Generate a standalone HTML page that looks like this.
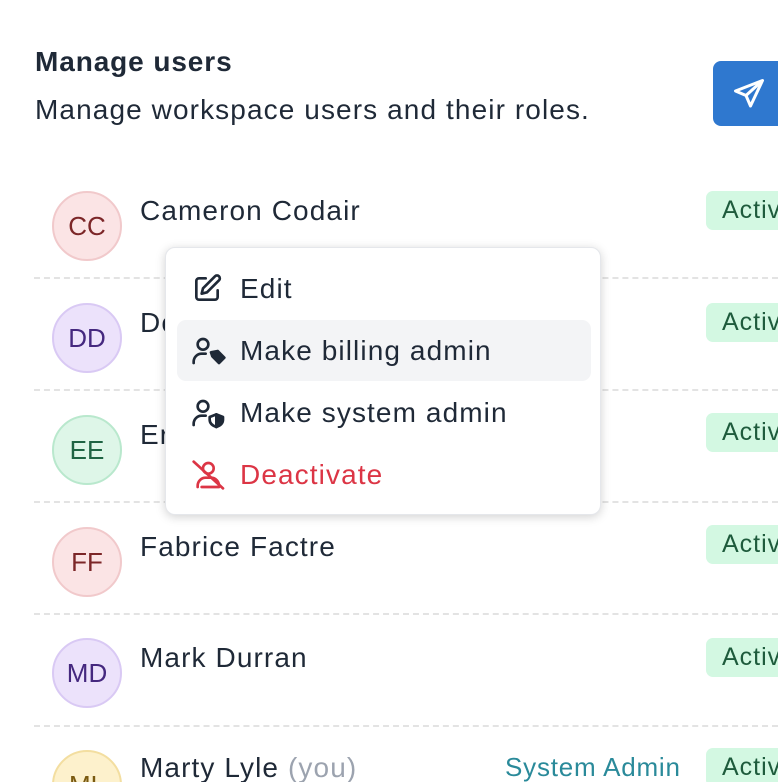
<!DOCTYPE html>
<html><head><style>
html,body{margin:0;width:778px;height:782px;overflow:hidden}
body{background:#fff;font-family:"Liberation Sans",sans-serif;color:#1f2937;position:relative;letter-spacing:1.1px}
.a{position:absolute}
h1{position:absolute;left:35px;top:46px;margin:0;font-size:28px;font-weight:bold;color:#1f2937;letter-spacing:0.9px}
.sub{left:35px;top:94px;font-size:28px;color:#1f2937}
.btn{left:713px;top:61px;width:90px;height:65px;background:#2f78cf;border-radius:8px}
.row{position:absolute;left:0;width:778px;height:100px;overflow:hidden}
.av{position:absolute;left:52px;top:13px;width:66px;height:66px;border-radius:50%;border:2px solid;display:flex;align-items:center;justify-content:center;font-size:26px;letter-spacing:0}
.nm{position:absolute;left:140px;top:2px;font-size:28px;color:#1f2937}
.bd{position:absolute;left:706px;top:3px;width:100px;height:39px;background:#d3f8e2;border-radius:7px;font-size:25px;color:#1e5b3c;padding-left:16px;box-sizing:border-box;line-height:39px;letter-spacing:1px}
.ln{position:absolute;left:34px;width:744px;border-top:2px dashed #e3e3e3}
.menu{left:165px;top:247px;width:436px;height:268px;background:#fff;border-radius:10px;box-shadow:0 2px 10px rgba(0,0,0,.18);border:1px solid #e5e7eb;box-sizing:border-box}
.it{position:absolute;left:11px;width:414px;height:61px;border-radius:9px;font-size:28px;line-height:61px;padding-left:63px;box-sizing:border-box}
.it svg{position:absolute;left:14px;top:15px}
</style></head><body>
<h1>Manage users</h1>
<div class="a sub">Manage workspace users and their roles.</div>
<div class="a btn"><svg width="36" height="36" viewBox="0 0 24 24" style="position:absolute;left:18px;top:15px" fill="none" stroke="#fff" stroke-width="2" stroke-linejoin="round"><path d="M21 3L3 10l7 3 3 7z"/><path d="M21 3L10 13"/></svg></div>

<div class="row" style="top:178px"><div class="av" style="background:#fbe4e5;border-color:#f1c9cb;color:#7c2628">CC</div><div class="nm" style="top:17px">Cameron Codair</div><div class="bd" style="top:13px">Active</div></div>
<div class="ln" style="top:277px"></div>
<div class="row" style="top:290px"><div class="av" style="background:#ece2fb;border-color:#d9c9f4;color:#45287f">DD</div><div class="nm" style="top:17px">Do</div><div class="bd" style="top:13px">Active</div></div>
<div class="ln" style="top:389px"></div>
<div class="row" style="top:402px"><div class="av" style="background:#def6e8;border-color:#b9e8cd;color:#1f6443">EE</div><div class="nm" style="top:17px">Er</div><div class="bd" style="top:11px">Active</div></div>
<div class="ln" style="top:501px"></div>
<div class="row" style="top:514px"><div class="av" style="background:#fbe4e5;border-color:#f1c9cb;color:#7c2628">FF</div><div class="nm" style="top:17px">Fabrice Factre</div><div class="bd" style="top:11px">Active</div></div>
<div class="ln" style="top:613px"></div>
<div class="row" style="top:625px"><div class="av" style="background:#ece2fb;border-color:#d9c9f4;color:#45287f">MD</div><div class="nm" style="top:17px">Mark Durran</div><div class="bd" style="top:13px">Active</div></div>
<div class="ln" style="top:725px"></div>
<div class="row" style="top:737px;height:45px"><div class="av" style="background:#fdf1cc;border-color:#f3dea0;color:#7a5a10">ML</div><div class="nm" style="top:15px">Marty Lyle <span style="color:#9ca3af">(you)</span></div><div class="a" style="left:505px;top:15px;font-size:26px;color:#2a8a9a;letter-spacing:0.8px">System Admin</div><div class="bd" style="top:11px">Active</div></div>

<div class="a menu">
<div class="it" style="top:10px"><svg width="32" height="32" viewBox="0 0 24 24" fill="none" stroke="#1f2937" stroke-width="2" stroke-linecap="round" stroke-linejoin="round"><path d="M11 4H6a2 2 0 0 0-2 2v12a2 2 0 0 0 2 2h12a2 2 0 0 0 2-2v-5"/><path d="M18 2.5a2.1 2.1 0 0 1 3 3L12 14.5l-4 1 1-4z"/></svg>Edit</div>
<div class="it" style="top:72px;background:#f3f4f6"><svg width="36" height="32" viewBox="0 0 27 24" fill="none" stroke="#1f2937" stroke-width="2" stroke-linecap="round" stroke-linejoin="round"><circle cx="9" cy="7" r="4"/><path d="M2 21v-1a6 6 0 0 1 6-6h3"/><path d="M15 13l5-1 5 5-4 4-5-5z" fill="#1f2937"/></svg>Make billing admin</div>
<div class="it" style="top:134px"><svg width="36" height="32" viewBox="0 0 27 24" fill="none" stroke="#1f2937" stroke-width="2" stroke-linecap="round" stroke-linejoin="round"><circle cx="9" cy="7" r="4"/><path d="M2 21v-1a6 6 0 0 1 6-6h3"/><path d="M19 13l5 2v2c0 3-2 4.5-5 5.5-3-1-5-2.5-5-5.5v-2z"/><path d="M19 13v9.5" /><path d="M19 14l4 1.6v1.4c0 2.4-1.6 3.6-4 4.5z" fill="#1f2937"/></svg>Make system admin</div>
<div class="it" style="top:196px;color:#dc3545"><svg width="36" height="32" viewBox="0 0 27 24" fill="none" stroke="#dc3545" stroke-width="2" stroke-linecap="round" stroke-linejoin="round"><circle cx="13" cy="7" r="4"/><path d="M5 21v-1a6 6 0 0 1 6-6h4a6 6 0 0 1 6 6v1H8"/><path d="M2 2l22 20"/></svg>Deactivate</div>
</div>
</body></html>
